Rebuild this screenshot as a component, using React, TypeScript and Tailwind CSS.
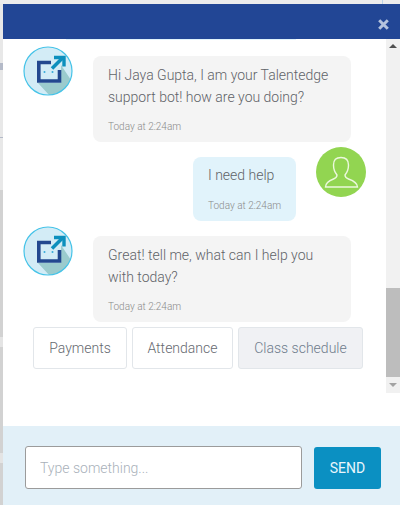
import React from 'react';

const font = 'font-[Roboto,"Liberation_Sans",sans-serif] font-light';

const BotAvatar: React.FC = () => (
  <svg width="50" height="50" viewBox="0 0 50 50" className="shrink-0">
    <defs>
      <clipPath id="bot-clip">
        <circle cx="25" cy="25" r="24" />
      </clipPath>
    </defs>
    <circle cx="25" cy="25" r="24" fill="#d3ecf6" />
    <path d="M15 37 L38 37 L38 19 L50 37 L40 50 L27 50 Z" fill="#9bcbcd" clipPath="url(#bot-clip)" />
    <path d="M28 16.5 H15.8 V35 H36.5 V24" fill="none" stroke="#23488f" strokeWidth="3.6" />
    <path d="M29 22.5 L39.5 12" stroke="#0c8fbd" strokeWidth="3.6" fill="none" />
    <path d="M31 11.5 H41 V20.5" stroke="#0c8fbd" strokeWidth="3.4" fill="none" />
    <circle cx="21.5" cy="26" r="1" fill="#37abd8" />
    <circle cx="29.5" cy="26" r="1" fill="#37abd8" />
    <circle cx="25" cy="25" r="24" fill="none" stroke="#45c3e8" strokeWidth="1.2" />
  </svg>
);

const UserAvatar: React.FC = () => (
  <svg width="50" height="50" viewBox="0 0 50 50" className="shrink-0">
    <circle cx="25" cy="25" r="25" fill="#92d551" />
    <path
      d="M9.5 40 C9.5 36 12.5 34 17.5 32 C20.5 31 21 30 21 28 C18.5 25 17.5 21 17.5 18 C17.5 13 20 10.5 25 10.5 C30 10.5 32.5 13 32.5 18 C32.5 21 31.5 25 29 28 C29 30 29.5 31 32.5 32 C38 34 41.5 36 41.5 40 Z"
      fill="none"
      stroke="#ecf8dd"
      strokeWidth="1.4"
    />
  </svg>
);

const BotMessage: React.FC<{ lines: string[] }> = ({ lines }) => (
  <div className="flex items-start pl-[20px]">
    <BotAvatar />
    <div className="ml-[20px] mt-[10px] w-[258px] h-[86px] rounded-[8px] bg-[#f4f4f4] pl-[15px] pt-[8px]">
      {lines.map((l) => (
        <p key={l} className="text-[14px] leading-[22px] text-[#5f6368]">{l}</p>
      ))}
      <p className="mt-[12px] text-[10px] leading-[14px] text-[#8a8a8a]">Today at 2:24am</p>
    </div>
  </div>
);

const Choice: React.FC<{ label: string; width: string; active?: boolean }> = ({ label, width, active }) => (
  <button className={`h-[42px] ${width} rounded-[3px] border border-[#e2e6ea] text-[14px] ${active ? 'bg-[#f0f1f4] text-[#6f7c8c]' : 'bg-white text-[#666a70]'}`}>
    {label}
  </button>
);

const App: React.FC = () => {
  return (
    <div className={`w-[400px] h-[505px] overflow-hidden flex flex-col bg-[#ececec] ${font}`}>
      <div className="h-[4px] shrink-0 flex justify-end">
        <div className="mr-[17px] w-[1px] bg-[#bcd3e6]" />
      </div>
      <div className="flex-1 min-h-0 flex">
        {/* page behind the popup, only a sliver shows */}
        <div className="w-[3px] shrink-0 flex flex-col bg-[#d2d2d2]">
          <div className="h-[59px] bg-[#e8e8e8]" />
          <div className="h-[7px] bg-[#b4bac8]" />
          <div className="h-[67px] bg-[#e8e8e8]" />
          <div className="h-[1px] bg-[#b4bac8]" />
          <div className="h-[52px] bg-[#e8e8e8]" />
          <div className="mt-[147px] h-[10px] bg-[#e4e4e4]" />
          <div className="mt-[106px] h-[10px] bg-[#e4e4e4]" />
        </div>

        <div className="w-[397px] flex flex-col bg-white">
          <div className="h-[35px] shrink-0 bg-[#224695] flex justify-end">
            <svg width="11" height="11" viewBox="0 0 11 11" className="mr-[11px] mt-[15px]">
              <path d="M1.2 1.2 L9.8 9.8 M9.8 1.2 L1.2 9.8" stroke="#b5c3dd" strokeWidth="3" fill="none" />
            </svg>
          </div>

          <div className="h-[354px] shrink-0 flex">
            <div className="flex-1 min-w-0">
              <div className="ml-[63px] w-[230px] h-[1px] bg-[#e1f3fb]" />
              <div className="mt-[6px]">
                <BotMessage lines={['Hi Jaya Gupta, I am your Talentedge', 'support bot! how are you doing?']} />
              </div>
              <div className="flex items-start mt-[5px]">
                <div className="ml-[190px] mt-[10px] w-[103px] h-[64px] rounded-[8px] bg-[#e1f3fb] pl-[15px] pt-[7px]">
                  <p className="text-[14px] leading-[22px] text-[#5f6368]">I need help</p>
                  <p className="mt-[13px] text-[10px] leading-[14px] text-[#8a8a8a]">Today at 2:24am</p>
                </div>
                <div className="ml-[20px]">
                  <UserAvatar />
                </div>
              </div>
              <div className="mt-[5px]">
                <BotMessage lines={['Great! tell me, what can I help you', 'with today?']} />
              </div>
              <div className="flex gap-[5px] pl-[30px] mt-[5px]">
                <Choice label="Payments" width="w-[94px]" />
                <Choice label="Attendance" width="w-[101px]" />
                <Choice label="Class schedule" width="w-[125px]" active />
              </div>
            </div>
            <div className="w-[14px] shrink-0 flex flex-col items-center bg-[#f1f1f1]">
              <div className="mt-[5px] h-[4px] w-0 border-x-[4px] border-b-[4px] border-x-transparent border-b-[#505050]" />
              <div className="mt-[240px] h-[89px] w-full bg-[#bdbdbd]" />
              <div className="mt-[6px] h-[4px] w-0 border-x-[4px] border-t-[4px] border-x-transparent border-t-[#a3a3a3]" />
            </div>
          </div>

          <div className="mt-[33px] flex-1 bg-[#e2f0f8] flex items-start pl-[22px] pt-[20px]">
            <input
              placeholder="Type something..."
              className="w-[277px] h-[43px] rounded-[3px] border border-[#9b9b9b] bg-white pl-[14px] text-[14px] font-light outline-none placeholder:text-[#a9b1ba]"
            />
            <button className="ml-[12px] mt-[1px] w-[67px] h-[42px] rounded-[3px] bg-[#0b90c2] text-[14px] font-normal text-[#e8f6fc]">SEND</button>
          </div>
        </div>
      </div>
    </div>
  );
};

export default App;
